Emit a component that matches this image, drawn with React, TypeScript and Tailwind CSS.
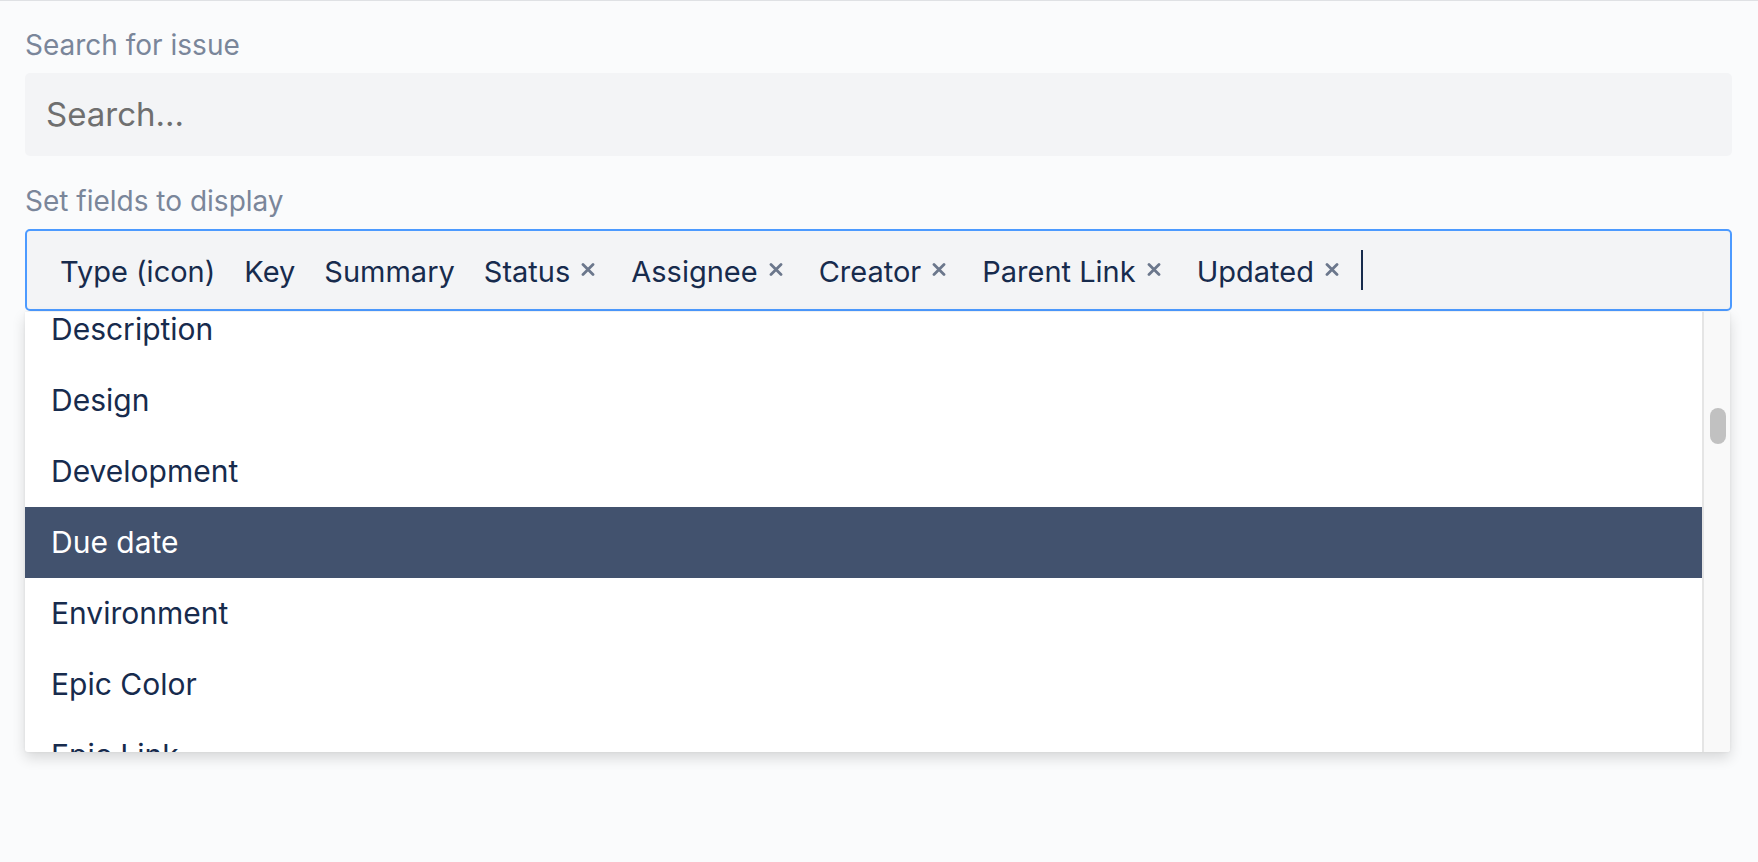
import React from "react";

type Token = { label: string; removable: boolean };

const tokens: Token[] = [
  { label: "Type (icon)", removable: false },
  { label: "Key", removable: false },
  { label: "Summary", removable: false },
  { label: "Status", removable: true },
  { label: "Assignee", removable: true },
  { label: "Creator", removable: true },
  { label: "Parent Link", removable: true },
  { label: "Updated", removable: true },
];

const options = [
  "Description",
  "Design",
  "Development",
  "Due date",
  "Environment",
  "Epic Color",
  "Epic Link",
];

function RemoveIcon() {
  return (
    <svg width="14" height="13" viewBox="0 0 14 13" className="mb-[4px] shrink-0">
      <path d="M2 1.5 L12 11.5 M12 1.5 L2 11.5" stroke="#6b778c" strokeWidth="2.8" strokeLinecap="round" />
    </svg>
  );
}

export default function App() {
  return (
    <div className="min-h-screen w-full bg-[#fafbfc] border-t border-[#dfe1e4] font-['Inter','Liberation_Sans',sans-serif]">
      <div className="pl-[25px] pr-[26px] pt-[27px]">
        <label className="block text-[28px] leading-[34px] text-[#7a869a]">Search for issue</label>
        <div className="mt-[11px] h-[83px] rounded-[5px] bg-[#f3f4f6] flex items-center pl-[21px]">
          <span className="text-[33px] text-[#6f6f6f]">Search...</span>
        </div>

        <label className="mt-[28px] block text-[28px] leading-[34px] text-[#7a869a]">Set fields to display</label>
        <div className="mt-[11px] h-[82px] rounded-[5px] border-2 border-[#4c9aff] bg-[#f3f4f6] flex items-center pl-[33px]">
          <div className="flex items-center gap-[29px] pt-[3px]">
            {tokens.map((t) => (
              <div
                key={t.label}
                className={`flex items-center gap-[11px] ${t.removable ? "pr-[7px]" : ""}`}
              >
                <span className="text-[29px] leading-[36px] text-[#172b4d]">{t.label}</span>
                {t.removable && <RemoveIcon />}
              </div>
            ))}
            <div className="w-[2px] h-[40px] bg-[#172b4d] -ml-[14px] -mt-[3px]" />
          </div>
        </div>

        {/* open options menu below the field */}
        <div className="mt-px w-[1705px] h-[440px] flex bg-white shadow-[0_6px_14px_rgba(0,0,0,0.14),0_0_3px_rgba(0,0,0,0.06)] rounded-b-[3px] overflow-hidden">
          <div className="flex-1 overflow-hidden">
            <div className="-mt-[18px]">
              {options.map((o) => {
                const active = o === "Due date";
                return (
                  <div
                    key={o}
                    className={`h-[71px] flex items-center pl-[26px] text-[30px] ${
                      active ? "bg-[#42526e] text-white" : "text-[#172b4d]"
                    }`}
                  >
                    {o}
                  </div>
                );
              })}
            </div>
          </div>
          <div className="w-[28px] bg-[#f9f9f9] border-l-2 border-[#e5e5e5] pt-[96px] pl-[6px]">
            <div className="w-[16px] h-[36px] rounded-full bg-[#c1c1c1]" />
          </div>
        </div>
      </div>
    </div>
  );
}
